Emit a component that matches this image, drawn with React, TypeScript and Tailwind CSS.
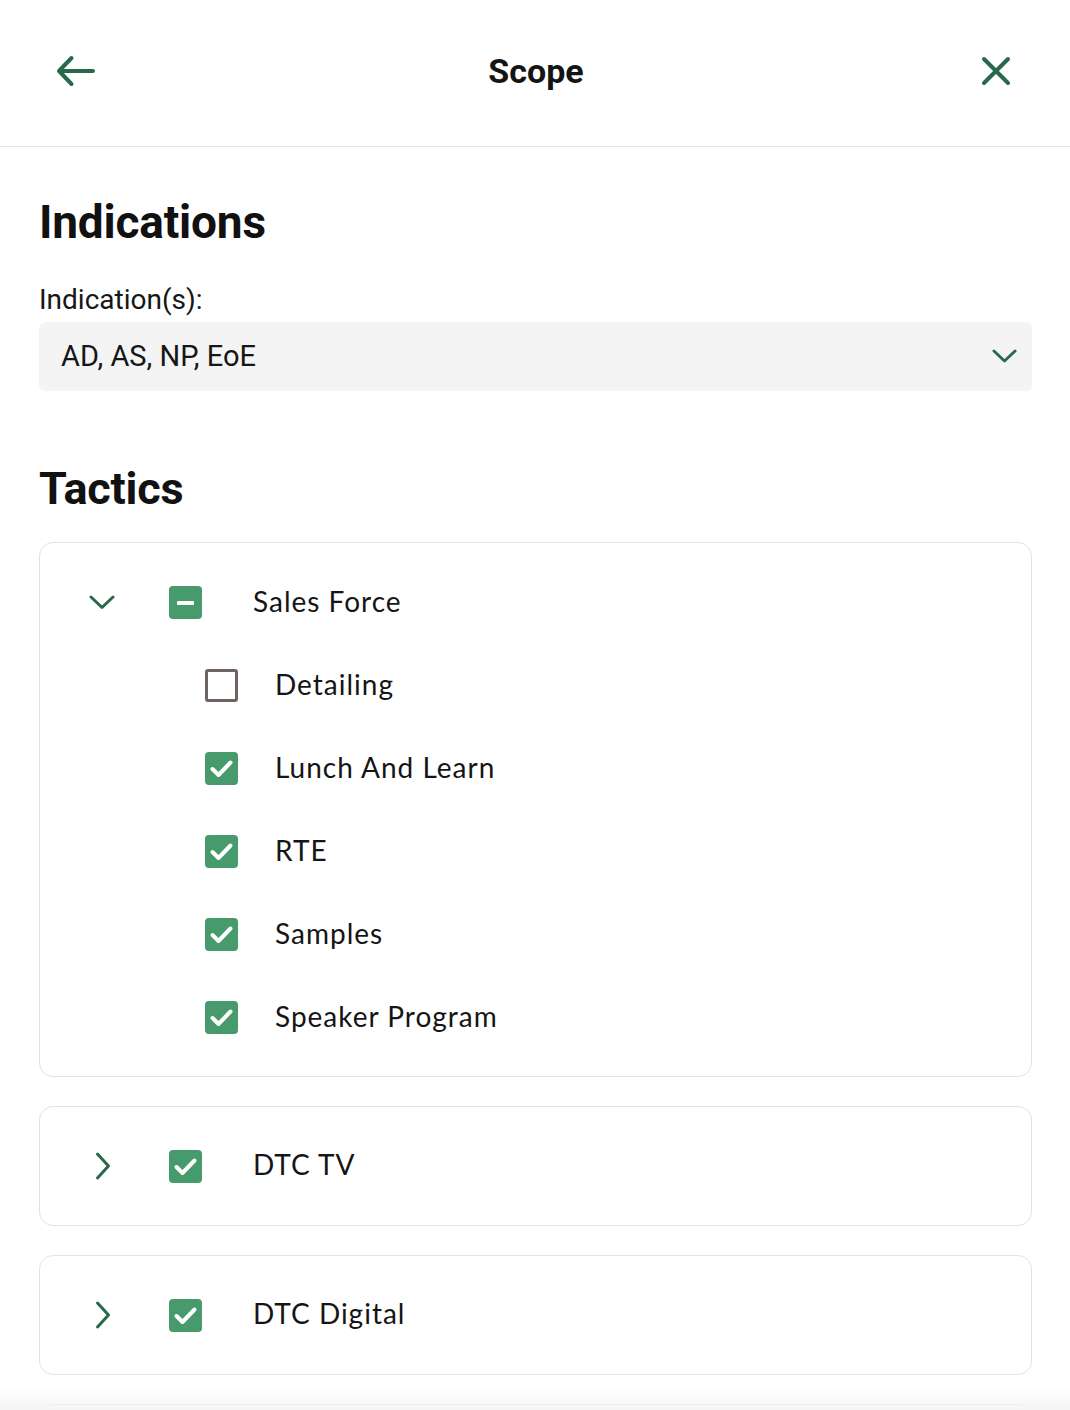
import React from "react";

const GREEN = "#28694b";

const labelFont = { fontFamily: "Lato, 'Noto Sans', sans-serif" };

const Checkbox = ({ state }: { state: "checked" | "partial" | "empty" }) => {
    if (state === "empty") {
        return <span className="block w-[33px] h-[33px] shrink-0 rounded-[3px] border-[3px] border-[#6e6560] bg-white" />;
    }
    return (
        <span className="flex w-[33px] h-[33px] shrink-0 items-center justify-center rounded-[4px] bg-[#479a6c]">
            {state === "checked" ? (
                <svg width="33" height="33" viewBox="0 0 33 33" fill="none">
                    <path d="M7.5 17 L13.5 23 L25.5 10.5" stroke="white" strokeWidth="4" strokeLinecap="round" strokeLinejoin="round" />
                </svg>
            ) : (
                <span className="block w-[17px] h-[4px] rounded-[1px] bg-white" />
            )}
        </span>
    );
};

const ChevronDown = ({ w = 26 }: { w?: number }) => (
    <svg width={w} height={w / 2 + 2} viewBox="0 0 26 15" fill="none">
        <path d="M2 2 L13 12.5 L24 2" stroke={GREEN} strokeWidth="3" strokeLinecap="round" strokeLinejoin="round" />
    </svg>
);

const ChevronRight = () => (
    <svg width="26" height="30" viewBox="0 0 26 30" fill="none">
        <path d="M8.5 3 L19.5 15 L8.5 27" stroke={GREEN} strokeWidth="3" strokeLinecap="round" strokeLinejoin="round" />
    </svg>
);

const subItems: { label: string; checked: boolean }[] = [
    { label: "Detailing", checked: false },
    { label: "Lunch And Learn", checked: true },
    { label: "RTE", checked: true },
    { label: "Samples", checked: true },
    { label: "Speaker Program", checked: true },
];

const labelCls = "pb-[4px] text-[28px] leading-none tracking-[1px] text-[#151515]";

const CollapsedCard = ({ label }: { label: string }) => (
    <div className="h-[120px] rounded-[14px] border border-[#e2e2e2] flex items-center pl-[49px]">
        <ChevronRight />
        <span className="ml-[54px]"><Checkbox state="checked" /></span>
        <span className={`ml-[51px] ${labelCls}`} style={labelFont}>{label}</span>
    </div>
);

export default function App() {
    return (
        <div className="min-h-screen bg-white text-[#111]" style={{ fontFamily: "Roboto, 'Liberation Sans', sans-serif" }}>
            <header className="grid grid-cols-[1fr_auto_1fr] items-center pt-[51px] pb-[55px] pl-[56px] pr-[59px] border-b border-[#e6e6e6]">
                <svg width="40" height="40" viewBox="0 0 40 40" fill="none">
                    <path d="M37 20 H4 M15.5 7 L3 20 L15.5 33" stroke={GREEN} strokeWidth="4" strokeLinecap="round" strokeLinejoin="round" />
                </svg>
                <h1 className="pl-[5px] text-[34px] leading-none font-bold text-[#141414]">Scope</h1>
                <svg className="justify-self-end" width="30" height="40" viewBox="0 0 30 40" fill="none">
                    <path d="M3 8 L27 32 M27 8 L3 32" stroke={GREEN} strokeWidth="4" strokeLinecap="round" />
                </svg>
            </header>

            <main className="pl-[39px] pr-[38px] pb-10">
                <h2 className="mt-[52px] text-[46px] leading-none font-bold tracking-[-0.2px]">Indications</h2>
                <p className="mt-[41px] text-[28px] leading-none text-[#161616]">Indication(s):</p>
                <div className="mt-[8px] h-[69px] rounded-[6px] bg-[#f4f4f4] flex items-center justify-between pl-[22px] pr-[15px]">
                    <span className="text-[29px] leading-none text-[#161616]">AD, AS, NP, EoE</span>
                    <ChevronDown w={25} />
                </div>

                <h2 className="mt-[75px] text-[45px] leading-none font-bold tracking-[-0.2px]">Tactics</h2>

                <div className="mt-[31px] flex flex-col gap-[29px]">
                    <div className="rounded-[14px] border border-[#e2e2e2] pt-[18px] pb-[17px]">
                        <div className="h-[83px] flex items-center pl-[49px]">
                            <ChevronDown />
                            <span className="ml-[54px]"><Checkbox state="partial" /></span>
                            <span className={`ml-[51px] ${labelCls}`} style={labelFont}>Sales Force</span>
                        </div>
                        {subItems.map((item) => (
                            <div key={item.label} className="h-[83px] flex items-center pl-[165px]">
                                <Checkbox state={item.checked ? "checked" : "empty"} />
                                <span className={`ml-[37px] ${labelCls}`} style={labelFont}>{item.label}</span>
                            </div>
                        ))}
                    </div>
                    <CollapsedCard label="DTC TV" />
                    <CollapsedCard label="DTC Digital" />
                    <CollapsedCard label="Medical Education" />
                </div>
            </main>

            <div className="pointer-events-none fixed inset-x-0 bottom-0 h-[22px] bg-gradient-to-b from-white/0 to-[#f3f3f3]/90" />
        </div>
    );
}
